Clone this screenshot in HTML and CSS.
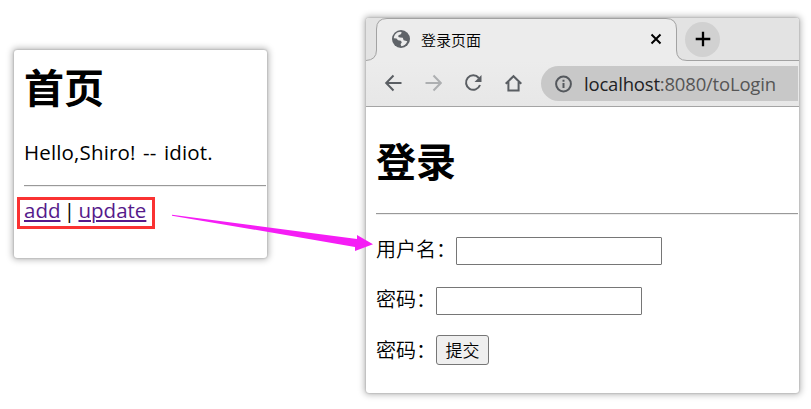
FILE: index.html
```html
<!DOCTYPE html>
<html lang="zh-CN">
<head>
<meta charset="utf-8">
<title>登录页面</title>
<link rel="stylesheet" href="styles.css">
</head>
<body>
<main class="scene">
  <section class="card home">
    <h1>首页</h1>
    <p class="hello">Hello,Shiro! -- idiot.</p>
    <hr>
    <div class="links"><a href="#add" class="add">add</a><span class="bar">|</span><a href="#update" class="update">update</a></div>
  </section>

  <section class="card browser">
    <header class="chrome">
      <svg class="tab-shape" width="433" height="43" viewBox="0 0 433 43">
        <path d="M0 42.5Q10.5 42 10.5 32V11Q10.5 .5 21 .5H300Q310.500 .5 310.500 11V32Q310.500 42.500 321 42.500H433V43H0Z" fill="#ececec"/>
        <path d="M0 42.500Q10.500 42 10.500 32V11Q10.500 .5 21 .5H300Q310.500 .5 310.500 11V32Q310.500 42.500 321 42.500H433" fill="none" stroke="#a2a2a2"/>
      </svg>
      <div class="tabs">
        <svg class="globe" width="22" height="22" viewBox="0 0 22 22"><circle cx="11" cy="11" r="9" fill="#5f6368"/><path d="M3.800 10.200C4 6.500 7 3.800 10.300 3.700L11.800 4.500 10.800 6.300 8.500 7.200 8.300 9 10 9.600 12.800 9.800 13.600 12.300 17.300 13.200C16.300 16 14 17.900 11.300 18.200L10.600 16.300 11.800 14.200 10.800 12.800 8 12.200 6.500 10.400Z" fill="#ececec"/></svg>
        <span class="tab-title">登录页面</span>
        <svg class="close" width="12" height="12" viewBox="0 0 12 12"><path d="M1.500 1.500l9 9M10.500 1.500l-9 9" stroke="#000" stroke-width="2"/></svg>
        <span class="new-tab"><svg width="16" height="16" viewBox="0 0 16 16"><path d="M8 .7v14.600M.7 8h14.600" stroke="#000" stroke-width="2.300"/></svg></span>
      </div>
      <nav class="toolbar">
        <svg width="18" height="18" viewBox="0 0 18 18"><path d="M17.500 9H2.500M9.500 1.500L2.200 9 9.500 16.500" stroke="#5a5e63"/></svg>
        <svg width="18" height="18" viewBox="0 0 18 18"><path d="M1.500 9h15M9.500 1.500L16.800 9 9.500 16.500" stroke="#adafb1"/></svg>
        <svg width="18" height="18" viewBox="0 0 18 18"><path d="M14.800 4A7.200 7.200 0 1 0 16 11" stroke="#5a5e63"/><path d="M17.500 1v7h-7z" fill="#5a5e63" stroke="none"/></svg>
        <svg width="18" height="18" viewBox="0 0 18 18"><path d="M1.700 9.700L9.500 2.200l7.800 7.500M4.400 8v8.500h10.200V8" stroke="#5a5e63"/></svg>
        <div class="address">
          <svg width="18" height="18" viewBox="0 0 18 18"><circle cx="8.500" cy="9" r="7.400" stroke="#54585d"/><path d="M8.500 8v5M8.500 4.800v2" stroke="#54585d"/></svg>
          <span class="url"><b>localhost</b>:8080/toLogin</span>
        </div>
      </nav>
    </header>
    <div class="page">
      <h1>登录</h1>
      <hr>
      <form>
        <div class="row"><label for="user">用户名：</label><input id="user" type="text"></div>
        <div class="row"><label for="pwd">密码：</label><input id="pwd" type="password"></div>
        <div class="row submit"><label>密码：</label><button type="button">提交</button></div>
      </form>
    </div>
  </section>
  <svg class="arrow" width="204" height="40" viewBox="0 0 204 40"><path d="M2 4.800L97 17.300 187 29V25L203 34.200 185 41V37L97 21.800 2 5.800Z" fill="#f51df5"/></svg>
</main>
</body>
</html>
```
FILE: styles.css
```css
* { box-sizing: border-box; }
body {
  margin: 0;
  background: #fff;
  color: #000;
  font-family: "Open Sans", "Noto Sans CJK SC", sans-serif;
}
.scene {
  position: relative;
  display: flex;
  align-items: flex-start;
  width: 811px;
  height: 409px;
  overflow: hidden;
}
.card {
  background: #fff;
  border-radius: 3px;
  box-shadow: 0 0 2px rgba(0, 0, 0, .3), 0 0 6px 2px rgba(0, 0, 0, .26);
}
h1 {
  margin: 0;
  font: bold 40px/52px "Noto Sans CJK SC", sans-serif;
}
hr {
  height: 2px;
  margin: 0;
  border: 0;
  border-top: 1px solid #999;
  border-bottom: 1px solid #eee;
}
.home {
  width: 253px;
  height: 208px;
  margin: 50px 0 0 14px;
  padding: 10px 1px 0 10px;
}
.hello {
  margin: 26px 0 19px;
  font-size: 20.5px;
  line-height: 28px;
  letter-spacing: .15px;
  word-spacing: 2px;
  white-space: nowrap;
}
.links {
  display: flex;
  align-items: center;
  width: 138px;
  height: 32px;
  margin: 10px 0 0 -7px;
  padding: 0 0 6px 4px;
  border: 3px solid #fa3232;
  font-size: 20.5px;
  white-space: nowrap;
}
.bar {
  width: 18px;
  text-align: center;
}
.links a {
  color: #551a8b;
  text-decoration-thickness: 2px;
  text-underline-offset: 2px;
}
.browser {
  width: 433px;
  height: 375px;
  margin: 18px 0 0 99px;
}
.chrome {
  position: relative;
  height: 89px;
  background: linear-gradient(#e3e3e3 0 42px, #ececec 43px, #e7e7e7);
  border-bottom: 1px solid #a4a4a4;
  border-radius: 3px 3px 0 0;
}
.tab-shape {
  position: absolute;
  top: 0;
  left: 0;
}
.tabs {
  position: relative;
  display: flex;
  align-items: center;
  height: 42px;
  padding-left: 24px;
}
.tab-title {
  width: 229px;
  margin-left: 9px;
  font-family: "Noto Sans CJK SC", sans-serif;
  font-size: 15px;
  font-weight: 350;
}
.new-tab {
  display: flex;
  align-items: center;
  justify-content: center;
  width: 35px;
  height: 35px;
  margin-left: 23px;
  border-radius: 50%;
  background: #d1d1d1;
}
.toolbar {
  display: flex;
  align-items: center;
  gap: 22px;
  height: 47px;
  padding-left: 18px;
}
.toolbar svg {
  flex: none;
  fill: none;
  stroke-width: 2;
}
.toolbar > svg { margin-bottom: 2px; }
.address {
  display: flex;
  flex: 1;
  align-items: center;
  gap: 11px;
  height: 35px;
  margin-left: -3px;
  margin-right: 1px;
  padding-left: 14px;
  border-radius: 18px 0 0 18px;
  background: #c8c8c8;
}
.url {
  margin-top: -1px;
  color: #555;
  font-size: 18.500px;
  letter-spacing: -.19px;
  white-space: nowrap;
}
.url b {
  color: #202124;
  font-weight: 400;
}
.page { padding: 27px 1px 0 10px; }
.page hr { margin-top: 27px; }
.row {
  display: flex;
  align-items: center;
  height: 28px;
  margin-top: 22px;
  font: 350 20px/28px "Noto Sans CJK SC", sans-serif;
}
.row label {
  margin-top: -5px;
  white-space: nowrap;
}
.row input {
  width: 206px;
  height: 28px;
  padding: 0 2px;
  border: 1px solid #767676;
  border-radius: 1px;
  background: #fff;
}
.submit {
  height: 30px;
  margin-top: 20px;
}
.submit label { margin-top: 0; }
.row button {
  width: 53px;
  height: 30px;
  padding: 0;
  border: 1px solid #767676;
  border-radius: 3px;
  background: #efefef;
  color: #000;
  font: 350 17px/26px "Noto Sans CJK SC", sans-serif;
}
.arrow {
  position: absolute;
  top: 210px;
  left: 170px;
  overflow: visible;
}
```
